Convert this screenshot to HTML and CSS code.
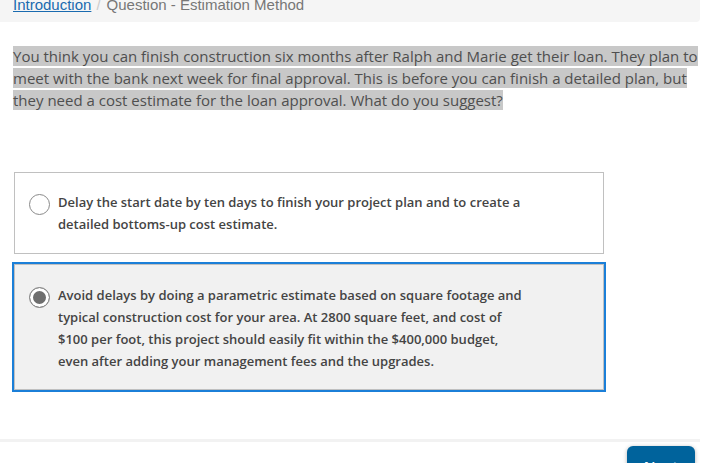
FILE: index.html
```html
<!DOCTYPE html>
<html lang="en">
<head>
    <meta charset="UTF-8">
    <meta name="viewport" content="width=device-width, initial-scale=1.0">
    <title>Question - Estimation Method</title>
    <link rel="stylesheet" href="styles.css">
</head>
<body>

    <div class="page">
        <!-- Breadcrumb -->
        <ol class="breadcrumb">
            <li><a href="#">Introduction</a></li>
            <li class="active">Question - Estimation Method</li>
        </ol>

        <!-- Question -->
        <p class="question"><span class="mark">You think you can finish construction six months after Ralph and Marie get their loan. They plan to meet with the bank next week for final approval. This is before you can finish a detailed plan, but they need a cost estimate for the loan approval. What do you suggest?</span></p>

        <!-- Answers -->
        <div class="choices">
            <label class="choice">
                <span class="radio"></span>
                <span class="choice-text">Delay the start date by ten days to finish your project plan and to create a detailed bottoms-up cost estimate.</span>
            </label>
            <label class="choice selected">
                <span class="radio checked"></span>
                <span class="choice-text">Avoid delays by doing a parametric estimate based on square footage and typical construction cost for your area. At 2800 square feet, and cost of $100 per foot, this project should easily fit within the $400,000 budget, even after adding your management fees and the upgrades.</span>
            </label>
        </div>

        <!-- Footer nav -->
        <div class="nav-footer">
            <button class="btn-next">Next</button>
        </div>
    </div>

</body>
</html>
```

FILE: styles.css
```css
body {
    margin: 0;
    padding: 0;
    background-color: white;
    font-family: "Open Sans", "Liberation Sans", sans-serif;
    color: #555;
}

.page {
    width: 700px;
}

/* Breadcrumb */
.breadcrumb {
    list-style: none;
    margin: -13px 0 0 0;
    padding: 8px 13px 7px 13px;
    background-color: #f5f5f5;
    border-radius: 0 0 4px 0;
    font-family: "Liberation Sans", Arial, sans-serif;
    font-size: 15px;
    line-height: 20px;
    display: flex;
}

.breadcrumb li + li::before {
    content: "/";
    color: #ccc;
    padding: 0 6px 0 5px;
}

.breadcrumb a {
    color: #1a6bb0;
    text-decoration: underline;
}

.breadcrumb .active {
    color: #777;
}

/* Question */
.question {
    margin: 23px 0 0 13px;
    font-size: 15px;
    line-height: 22px;
    color: #4f4f4f;
}

.question .mark {
    background-color: #c8c8c8;
}

/* Choices */
.choices {
    margin: 61px 0 0 14px;
    width: 590px;
    display: flex;
    flex-direction: column;
    gap: 10px;
}

.choice {
    display: flex;
    align-items: flex-start;
    gap: 8px;
    padding: 18px 15px 18px 14px;
    border: 1px solid #c0c0c0;
    background-color: white;
    cursor: pointer;
}

.choice.selected {
    background-color: #f1f1f1;
    outline: 2px solid #1b7fd8;
    padding-top: 19px;
    padding-bottom: 17px;
}

.radio {
    flex: none;
    width: 19px;
    height: 19px;
    margin-top: 3px;
    border: 1px solid #8a8a8a;
    border-radius: 50%;
    background-color: white;
}

.radio.checked {
    background-color: #6e6e6e;
    box-shadow: inset 0 0 0 3px white;
}

.choice-text {
    max-width: 466px;
    font-size: 13px;
    font-weight: 600;
    line-height: 22px;
    color: #444;
}

/* Footer */
.nav-footer {
    margin-top: 49px;
    border-top: 3px solid #f2f2f2;
    display: flex;
    justify-content: flex-end;
    padding: 4px 5px 0 0;
}

.btn-next {
    background-color: #00639c;
    color: white;
    border: none;
    border-radius: 6px;
    width: 68px;
    padding: 10px 0;
    font-family: "Open Sans", sans-serif;
    font-size: 15px;
    font-weight: 600;
    box-shadow: 0 1px 4px rgba(0,0,0,0.3);
}
```
